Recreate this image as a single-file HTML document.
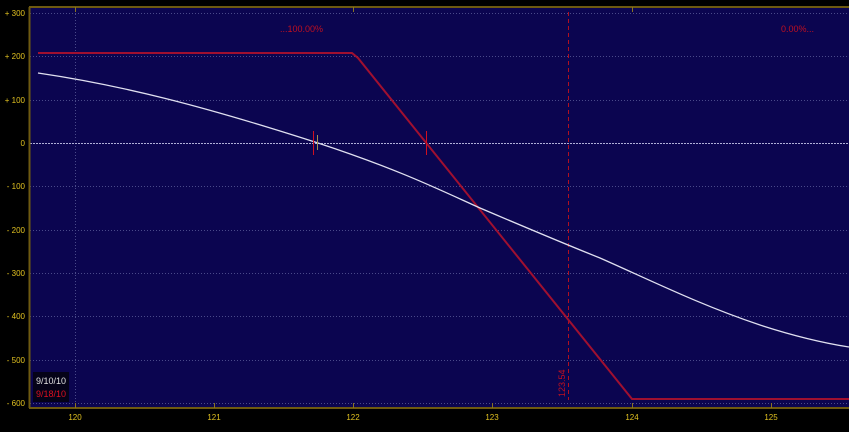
<!DOCTYPE html>
<html><head><meta charset="utf-8"><style>
html,body{margin:0;padding:0;background:#000;width:849px;height:432px;overflow:hidden}
svg{display:block;font-family:"Liberation Sans",sans-serif}
</style></head><body>
<svg width="849" height="432" viewBox="0 0 849 432">
<rect x="0" y="0" width="849" height="432" fill="#000"/>
<rect x="29" y="7" width="820" height="401" fill="#0b0550"/>
<g stroke="#4a4a8a" stroke-width="1" stroke-dasharray="1,2">
<line x1="30" y1="13.5" x2="849" y2="13.5"/>
<line x1="30" y1="56.5" x2="849" y2="56.5"/>
<line x1="30" y1="100.5" x2="849" y2="100.5"/>
<line x1="30" y1="186.5" x2="849" y2="186.5"/>
<line x1="30" y1="230.5" x2="849" y2="230.5"/>
<line x1="30" y1="273.5" x2="849" y2="273.5"/>
<line x1="30" y1="316.5" x2="849" y2="316.5"/>
<line x1="30" y1="360.5" x2="849" y2="360.5"/>
<line x1="30" y1="403.5" x2="849" y2="403.5"/>
<line x1="75.5" y1="8" x2="75.5" y2="408"/>
</g>
<line x1="30" y1="143.5" x2="849" y2="143.5" stroke="#b0b0d8" stroke-width="1" stroke-dasharray="2,1"/>
<line x1="568.5" y1="12" x2="568.5" y2="400" stroke="#b01020" stroke-width="1" stroke-dasharray="4,3"/>
<g stroke="#6e5a10" stroke-width="2">
<line x1="29" y1="7" x2="849" y2="7"/>
<line x1="29" y1="408" x2="849" y2="408"/>
<line x1="29.5" y1="7" x2="29.5" y2="408"/>
</g>
<g stroke="#8a7420" stroke-width="1">
<line x1="75.5" y1="7" x2="75.5" y2="12"/><line x1="353.5" y1="7" x2="353.5" y2="12"/><line x1="632.5" y1="7" x2="632.5" y2="12"/>
<line x1="75.5" y1="403" x2="75.5" y2="408"/><line x1="214.5" y1="403" x2="214.5" y2="408"/><line x1="353.5" y1="403" x2="353.5" y2="408"/><line x1="492.5" y1="403" x2="492.5" y2="408"/><line x1="632.5" y1="403" x2="632.5" y2="408"/><line x1="771.5" y1="403" x2="771.5" y2="408"/>
</g>
<polyline points="38,53 352,53 358,58 632,399 849,399" fill="none" stroke="#a01030" stroke-width="2"/>
<path d="M38,73 C120,85 200,105 318,143 C400,170 440,190 480,208 C520,225 560,242 600,258 C650,280 700,305 760,325 C800,338 830,344 849,347" fill="none" stroke="#e0e0f0" stroke-width="1.3"/>
<line x1="313.5" y1="131" x2="313.5" y2="155" stroke="#d01020" stroke-width="1"/>
<line x1="317.5" y1="135" x2="317.5" y2="150" stroke="#a09050" stroke-width="1"/>
<line x1="426.5" y1="131" x2="426.5" y2="155" stroke="#d01020" stroke-width="1"/>
<text x="280" y="32" fill="#c01020" font-size="9">...100.00%</text>
<text x="781" y="32" fill="#c01020" font-size="9">0.00%...</text>
<text x="0" y="0" fill="#c01020" font-size="9" transform="translate(565,397) rotate(-90)">123.54</text>
<g fill="#e0c020" font-size="8" text-anchor="end">
<text x="25" y="16">+ 300</text><text x="25" y="59">+ 200</text><text x="25" y="103">+ 100</text><text x="25" y="146">0</text>
<text x="25" y="189">- 100</text><text x="25" y="233">- 200</text><text x="25" y="276">- 300</text><text x="25" y="319">- 400</text><text x="25" y="363">- 500</text><text x="25" y="406">- 600</text>
</g>
<g fill="#e0c020" font-size="8" text-anchor="middle">
<text x="75" y="420">120</text><text x="214" y="420">121</text><text x="353" y="420">122</text><text x="492" y="420">123</text><text x="632" y="420">124</text><text x="771" y="420">125</text>
</g>
<rect x="33" y="372" width="36" height="30" fill="#050318"/>
<text x="36" y="384" fill="#e0e0e0" font-size="9">9/10/10</text>
<text x="36" y="397" fill="#e01020" font-size="9">9/18/10</text>
</svg>
</body></html>
